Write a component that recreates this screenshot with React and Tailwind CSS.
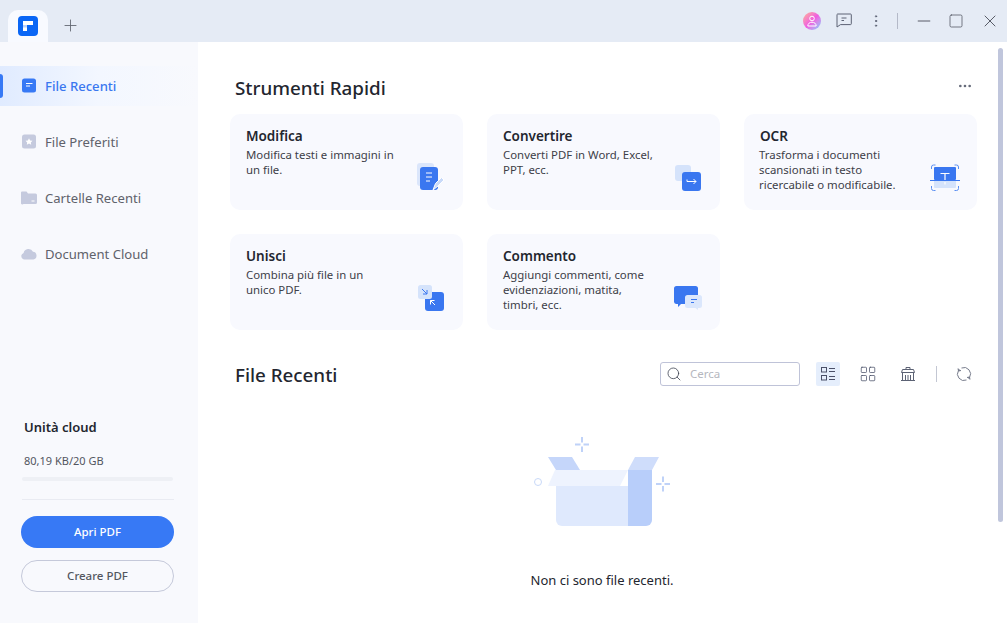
import { Plus, Minus, Square, X, EllipsisVertical, Ellipsis, Search, LayoutGrid } from "lucide-react";

const FONT = "font-['Noto_Sans','Open_Sans',sans-serif]";

const NAV_ITEMS = [
  { label: "File Recenti", icon: "recent", active: true },
  { label: "File Preferiti", icon: "star" },
  { label: "Cartelle Recenti", icon: "folder" },
  { label: "Document Cloud", icon: "cloud" },
];

const NavIcon = ({ name }) => {
  if (name === "recent") {
    return (
      <svg width="16" height="16" viewBox="0 0 16 16">
        <rect x="1" y="0.5" width="14" height="14" rx="2.5" fill="#3779f5" />
        <path d="M5 5.5h6.5M5 8h4" stroke="#fff" strokeWidth="1" />
      </svg>
    );
  }
  if (name === "star") {
    return (
      <svg width="16" height="16" viewBox="0 0 16 16">
        <rect x="1" y="0.5" width="14" height="14" rx="2.5" fill="#c5cade" />
        <path d="M8 4.2l1.1 2.2 2.4.3-1.7 1.7.4 2.4L8 9.6l-2.2 1.2.4-2.4-1.7-1.7 2.4-.3z" fill="#fff" />
      </svg>
    );
  }
  if (name === "folder") {
    return (
      <svg width="16" height="16" viewBox="0 0 16 16">
        <path d="M0 2.5a1 1 0 0 1 1-1h4.5l1.5 2h7.5a1.5 1.5 0 0 1 1.5 1.5v7.5a1.5 1.5 0 0 1-1.5 1.5h-12A1.5 1.5 0 0 1 0 12.5z" fill="#c5cade" />
        <path d="M10.5 11h3" stroke="#fff" strokeWidth="1" />
      </svg>
    );
  }
  return (
    <svg width="16" height="16" viewBox="0 0 16 16">
      <path d="M3.5 13.5a3.4 3.4 0 0 1-.9-6.6A5 5 0 0 1 12 5.8a3.9 3.9 0 0 1 .4 7.7z" fill="#c5cade" />
    </svg>
  );
};

const ToolIcon = ({ name }) => {
  if (name === "edit") {
    return (
      <svg width="28" height="28" viewBox="0 0 28 28">
        <rect x="0" y="0" width="17" height="23" rx="3" fill="#dbe6fb" />
        <rect x="3" y="4" width="18" height="23" rx="3" fill="#3a77f0" />
        <path d="M9 10h6M9 14h6M9 18h4" stroke="#fff" strokeWidth="1" />
        <path d="M16 27l2.5-6.5 6-6 2.5 2.5-6 6z" fill="#c9daf9" stroke="#fff" strokeWidth="1" />
      </svg>
    );
  }
  if (name === "convert") {
    return (
      <svg width="26" height="26" viewBox="0 0 26 26">
        <rect x="0" y="0" width="16" height="16" rx="3" fill="#d5e3fb" />
        <rect x="7" y="7" width="19" height="19" rx="3" fill="#3a77f0" />
        <path d="M12 14.5v2h9M18.5 14l2.5 2.5-2.5 2.5" stroke="#fff" strokeWidth="1" fill="none" />
      </svg>
    );
  }
  if (name === "ocr") {
    return (
      <svg width="30" height="27" viewBox="0 0 30 27">
        <rect x="4" y="3" width="22" height="13" rx="1" fill="#3a77f0" />
        <rect x="4" y="16" width="22" height="8" rx="1" fill="#d5e3fb" />
        <path d="M1.5 5V3a2 2 0 0 1 2-2h2M24.5 1h2a2 2 0 0 1 2 2v2M1.5 22v2.5a2 2 0 0 0 2 2h2M24.5 26.5h2a2 2 0 0 0 2-2V22" stroke="#5c90f2" strokeWidth="1" fill="none" />
        <path d="M0 16.5h30" stroke="#3a77f0" strokeWidth="1" />
        <path d="M10.5 9.5h9M15 9.5V16M15 18v2.5" stroke="#fff" strokeWidth="1.2" />
      </svg>
    );
  }
  if (name === "merge") {
    return (
      <svg width="26" height="26" viewBox="0 0 26 26">
        <rect x="7" y="7" width="19" height="19" rx="3" fill="#3a77f0" />
        <rect x="0" y="0" width="14" height="14" rx="2.5" fill="#d5e3fb" />
        <path d="M4 4l5 5M9 5v4H5" stroke="#3a77f0" strokeWidth="1" fill="none" />
        <path d="M17 20l-4.5-4.5M12.5 19.5v-4h4" stroke="#fff" strokeWidth="1" fill="none" />
      </svg>
    );
  }
  return (
    <svg width="28" height="24" viewBox="0 0 28 24">
      <path d="M2.5 0h19A2.5 2.5 0 0 1 24 2.5V16a2 2 0 0 1-2 2H7l-3 3v-3H2.5A2.5 2.5 0 0 1 0 16V2.5A2.5 2.5 0 0 1 2.5 0z" fill="#3a77f0" />
      <path d="M13.5 9h12A2.5 2.5 0 0 1 28 11.5v8a2.5 2.5 0 0 1-2.5 2.5H24v2l-2.5-2h-8a2.5 2.5 0 0 1-2.5-2.5v-8A2.5 2.5 0 0 1 13.5 9z" fill="#dbe7fc" />
      <path d="M17 13.5h6M17 16.5h3" stroke="#3a77f0" strokeWidth="1" />
    </svg>
  );
};

const TOOLS = [
  { title: "Modifica", text: "Modifica testi e immagini in un file.", icon: "edit", iconClass: "right-[18px] bottom-[19px]", textClass: "w-[160px]" },
  { title: "Convertire", text: "Converti PDF in Word, Excel, PPT, ecc.", icon: "convert", iconClass: "right-[19px] bottom-[19px]", textClass: "w-[160px]" },
  { title: "OCR", text: "Trasforma i documenti scansionati in testo ricercabile o modificabile.", icon: "ocr", iconClass: "right-[17px] bottom-[19px]", textClass: "w-[145px] -ml-px" },
  { title: "Unisci", text: "Combina più file in un unico PDF.", icon: "merge", iconClass: "right-[19px] bottom-[19px]", textClass: "w-[145px]" },
  { title: "Commento", text: "Aggiungi commenti, come evidenziazioni, matita, timbri, ecc.", icon: "comment", iconClass: "right-[18px] bottom-[20px]", textClass: "w-[150px]" },
];

const ToolCard = ({ title, text, icon, iconClass, textClass }) => (
  <div className="relative h-[96px] rounded-[10px] bg-[#f8f9fe] pl-4 pt-[12px]">
    <h3 className="text-[13.5px] font-semibold leading-[20px] text-[#23262f]">{title}</h3>
    <p className={`mt-[1px] text-[11.4px] leading-[15px] text-[#3d4048] ${textClass}`}>{text}</p>
    <div className={`absolute ${iconClass}`}>
      <ToolIcon name={icon} />
    </div>
  </div>
);

const Sidebar = () => (
  <aside className="flex w-[198px] shrink-0 flex-col bg-[#f8f9fd]">
    <nav className="flex flex-col gap-4 pt-6">
      {NAV_ITEMS.map((item) => (
        <div
          key={item.label}
          className={`relative flex h-10 items-center gap-2 pl-[21px] text-[13.1px] ${
            item.active
              ? "bg-gradient-to-r from-[#e0ebff] via-[#f3f7ff] to-[#f8f9fd] font-medium text-[#3a77f0]"
              : "text-[#5f626b]"
          }`}
        >
          {item.active && <span className="absolute left-0 top-2 h-6 w-[3px] rounded-r-sm bg-[#3779f5]" />}
          <NavIcon name={item.icon} />
          <span className="pt-[2px]">{item.label}</span>
        </div>
      ))}
    </nav>
    <div className="mt-auto px-[22px] pb-[31px]">
      <h4 className="pl-[2px] text-[13px] font-semibold leading-[20px] text-[#23262f]">Unità cloud</h4>
      <p className="mt-4 pl-[2px] text-[11px] leading-[16px] text-[#53565f]">80,19 KB/20 GB</p>
      <div className="mt-2 h-1 w-[151px] rounded-full bg-[#eef0f5]" />
      <div className="mt-[18px] h-px w-[152px] bg-[#e9ebf2]" />
      <button type="button" className="-ml-px mt-4 block h-8 w-[153px] rounded-full bg-[#3779f5] text-[11.5px] font-medium text-white">
        Apri PDF
      </button>
      <button type="button" className="-ml-px mt-3 block h-8 w-[153px] rounded-full border border-[#c5c9da] text-[11.5px] font-medium text-[#53565f]">
        Creare PDF
      </button>
    </div>
  </aside>
);

const ListIcon = () => (
  <svg width="16" height="16" viewBox="0 0 16 16" fill="none" stroke="#4a5068" strokeWidth="1">
    <rect x="1.5" y="1.5" width="5" height="4.5" />
    <rect x="1.5" y="9.5" width="5" height="4.5" />
    <path d="M9 2.5h6M9 5.5h6M9 10.5h6M9 13.5h6" />
  </svg>
);

const TrashIcon = () => (
  <svg width="16" height="16" viewBox="0 0 16 16" fill="none" stroke="#5c6274" strokeWidth="1">
    <path d="M6 3V1.5h4V3M2.5 3.5h11l1 3h-13zM2.5 6.5v8h11v-8M5.5 9v5.5M8 9v5.5M10.5 9v5.5M1 14.5h14" />
  </svg>
);

const RefreshIcon = () => (
  <svg width="16" height="16" viewBox="0 0 16 16" fill="none" stroke="#777c8c" strokeWidth="1">
    <path d="M5.5 2a6.5 6.5 0 0 1 8 9.5M10.5 14a6.5 6.5 0 0 1-8-9.5" />
    <path d="M2 2.5l.5 2.5 2.5-.5M14 13.5l-.5-2.500-2.500.5" fill="#777c8c" />
  </svg>
);

// drawn in page coordinates: the svg covers x 530-670, y 436-532
const EmptyBox = () => (
  <svg width="140" height="96" viewBox="530 436 140 96" fill="none">
    <path d="M582 437v5.500M582 446.500v5.500M575 444.500h5.500M583.500 444.500h5.500" stroke="#bfd2f8" strokeWidth="2" />
    <path d="M663 476.500v5.500M663 486v5.500M656 484h5.500M664.500 484h5.500" stroke="#bfd2f8" strokeWidth="2" />
    <circle cx="538" cy="482" r="3.5" stroke="#c9d9f8" strokeWidth="1" />
    <path d="M548 457h24l8 13h-24z" fill="#c5d6fa" />
    <path d="M635 457h24l-7 13h-24z" fill="#cfddfb" />
    <path d="M556 486h72v40h-66a6 6 0 0 1-6-6z" fill="#dfe9fd" />
    <path d="M628 470h24v50a6 6 0 0 1-6 6h-18z" fill="#b8cefa" />
    <path d="M555 470h73l-8 16h-72z" fill="#eef3fe" />
  </svg>
);

const TitleBar = () => (
  <header className="flex h-[42px] shrink-0 items-end bg-[#e5ebf5]">
    <div className="ml-2 flex h-8 w-10 items-center justify-center rounded-t-[10px] bg-[#f8faff]">
      <svg width="20" height="20" viewBox="0 0 20 20">
        <rect width="20" height="20" rx="4" fill="#0a66f5" />
        <path d="M5 5h10v4h-6v6H5z" fill="#fff" />
        <rect x="5" y="9" width="4" height="2.5" fill="#bcd3fb" />
      </svg>
    </div>
    <div className="ml-[13px] flex h-[34px] items-center">
      <Plus size={19} strokeWidth={1.1} color="#60646f" />
    </div>
    <div className="ml-auto flex h-full items-center pb-[1px]">
      <div className="relative flex h-[18px] w-[18px] items-center justify-center rounded-full bg-gradient-to-br from-[#ffb28a] via-[#f05ce0] to-[#5ccaff]">
        <svg width="12" height="12" viewBox="0 0 12 12" fill="none" stroke="#fff" strokeWidth="1">
          <circle cx="6" cy="3.5" r="2.3" />
          <path d="M1.8 11c0-2.5 2-3.8 4.2-3.8s4.2 1.3 4.2 3.8z" />
        </svg>
      </div>
      <svg className="ml-[15px]" width="16" height="15" viewBox="0 0 16 15" fill="none" stroke="#5c6274" strokeWidth="1">
        <path d="M1.5 1h13a.8.8 0 0 1 .8.8v9a.8.8 0 0 1-.8.8H4.5L1 14V1.8a.8.8 0 0 1 .5-.8z" />
        <path d="M5.5 5h5M5.5 7.5h2.5" />
      </svg>
      <EllipsisVertical className="ml-4" size={16} strokeWidth={1.5} color="#5c6274" />
      <div className="ml-[13px] h-4 w-px bg-[#b4b9c8]" />
      <Minus className="ml-4" size={20} strokeWidth={1.1} color="#4a4e5a" />
      <Square className="ml-[14px]" size={16} strokeWidth={1.1} color="#4a4e5a" />
      <X className="ml-4 mr-[7px]" size={20} strokeWidth={1.1} color="#4a4e5a" />
    </div>
  </header>
);

export default function App() {
  return (
    <div className={`${FONT} flex h-[623px] w-[1007px] flex-col overflow-hidden bg-white`}>
      <TitleBar />
      <div className="relative flex min-h-0 flex-1">
        <Sidebar />
        <main className="min-w-0 flex-1 pl-[32px] pr-[30px]">
          <div className="flex h-[72px] items-center justify-between pl-[5px] pt-5">
            <h2 className="text-[18.8px] font-medium text-[#23262f]">Strumenti Rapidi</h2>
            <Ellipsis className="mr-[4px] mt-[-4px]" size={16} color="#666b7a" />
          </div>
          <div className="grid grid-cols-[233px_233px_233px] gap-x-6 gap-y-6">
            {TOOLS.map((tool) => (
              <ToolCard key={tool.title} {...tool} />
            ))}
          </div>
          <div className="mt-[32px] flex h-6 items-center justify-between pl-[5px]">
            <h2 className="pt-[2px] text-[18.8px] font-medium text-[#23262f]">File Recenti</h2>
            <div className="flex items-center">
              <div className="flex h-6 w-[140px] items-center gap-2 rounded-[3px] border border-[#bfc3d8] pl-[5px]">
                <Search size={16} strokeWidth={1.2} color="#3e4250" />
                <span className="text-[11.5px] text-[#b5b7be]">Cerca</span>
              </div>
              <div className="ml-4 flex h-6 w-6 items-center justify-center rounded-[2px] bg-[#e5eefc]">
                <ListIcon />
              </div>
              <LayoutGrid className="ml-[19px]" size={18} strokeWidth={1} color="#4a5068" />
              <div className="ml-[23px]">
                <TrashIcon />
              </div>
              <div className="ml-[20px] h-4 w-px bg-[#c3c7d3]" />
              <div className="ml-[19px] mr-[5px]">
                <RefreshIcon />
              </div>
            </div>
          </div>
          <div className="mt-[50px] flex flex-col items-center">
            <div className="mr-[7px]">
              <EmptyBox />
            </div>
            <p className="mr-[3px] mt-[39px] text-[13px] text-[#23262f]">Non ci sono file recenti.</p>
          </div>
        </main>
        <div className="absolute right-1 top-[6px] h-[474px] w-[5px] rounded-full bg-[#c0c6dc]" />
      </div>
    </div>
  );
}
